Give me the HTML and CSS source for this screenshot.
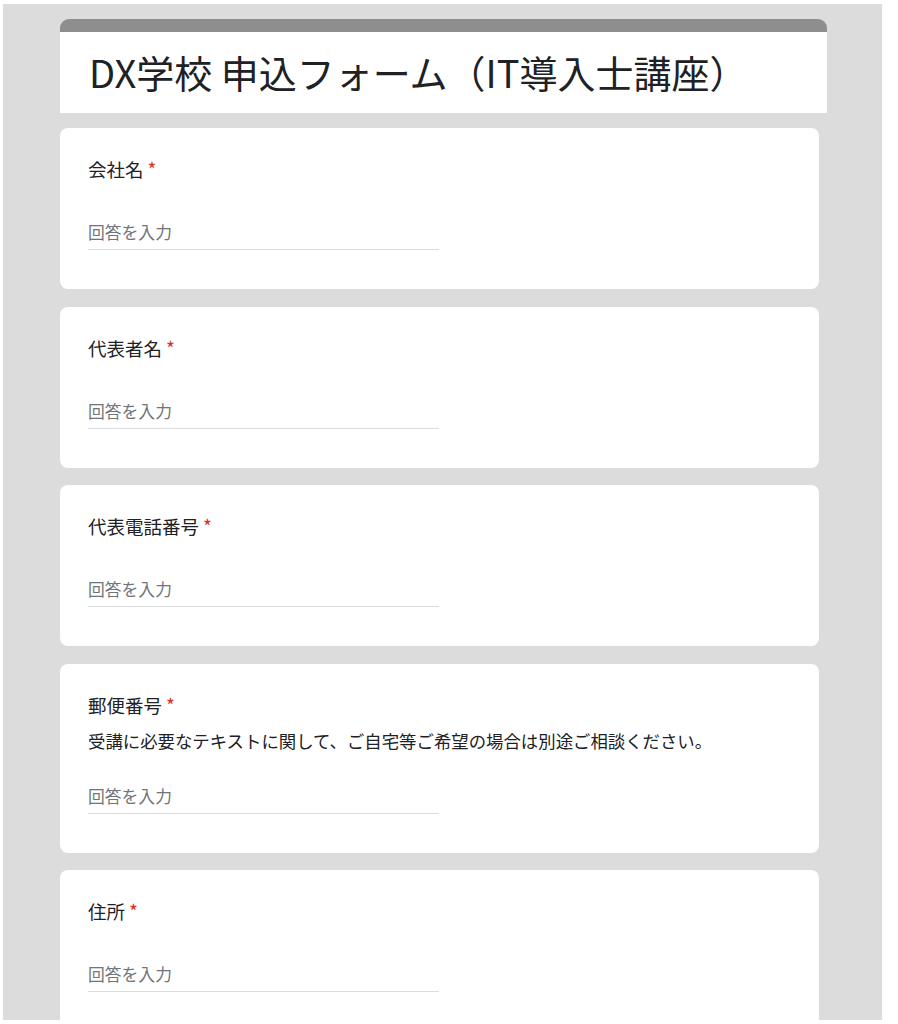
FILE: index.html
```html
<!DOCTYPE html>
<html lang="ja">
<head>
<meta charset="utf-8">
<title>DX学校 申込フォーム（IT導入士講座）</title>
<link rel="stylesheet" href="styles.css">
</head>
<body>
<div class="page">
  <div class="form">
    <header class="form-header">
      <h1 class="form-title">DX学校 申込フォーム（IT導入士講座）</h1>
    </header>

    <section class="card">
      <div class="label">会社名<span class="req">*</span></div>
      <div class="answer">回答を入力</div>
    </section>

    <section class="card">
      <div class="label">代表者名<span class="req">*</span></div>
      <div class="answer">回答を入力</div>
    </section>

    <section class="card">
      <div class="label">代表電話番号<span class="req">*</span></div>
      <div class="answer">回答を入力</div>
    </section>

    <section class="card card--desc">
      <div class="label">郵便番号<span class="req">*</span></div>
      <div class="desc">受講に必要なテキストに関して、ご自宅等ご希望の場合は別途ご相談ください。</div>
      <div class="answer">回答を入力</div>
    </section>

    <section class="card">
      <div class="label">住所<span class="req">*</span></div>
      <div class="answer">回答を入力</div>
    </section>
  </div>
</div>
</body>
</html>
```

FILE: styles.css
```css
* {
  box-sizing: border-box;
}

html, body {
  margin: 0;
  padding: 0;
  background: #ffffff;
}

body {
  font-family: "Noto Sans CJK JP", "Noto Sans", sans-serif;
  color: #202124;
}

.page {
  margin: 4px 0 0 3px;
  width: 879px;
  height: 1016px;
  background: #dcdcdc;
  overflow: hidden;
  padding: 15px 0 0 57px;
}

.form {
  display: flex;
  flex-direction: column;
  align-items: flex-start;
}

.form-header {
  width: 767px;
  height: 94px;
  background: #ffffff;
  border-top: 13px solid #8e8e8e;
  border-radius: 9px 9px 0 0;
  display: flex;
  align-items: center;
  padding: 0 0 2px 29px;
  margin-bottom: 15px;
}

.form-title {
  margin: 0;
  font-size: 38px;
  font-weight: 400;
  line-height: 1.2;
  letter-spacing: 0;
  color: #202124;
}

.card {
  width: 759px;
  background: #ffffff;
  border-radius: 8px;
  padding: 29px 28px 39px 28px;
  margin-bottom: 17.5px;
}

.label {
  font-size: 18.5px;
  line-height: 24px;
  color: #202124;
}

.req {
  color: #d93025;
  margin-left: 4px;
  font-size: 19px;
}

.desc {
  margin-top: 12px;
  font-size: 17.4px;
  line-height: 24px;
  color: #202124;
}

.answer {
  margin-top: 39px;
  width: 351px;
  font-size: 16.8px;
  line-height: 24px;
  color: #70757a;
  padding-bottom: 5px;
  border-bottom: 1px solid #dadce0;
}

.card--desc .answer {
  margin-top: 31px;
}
```
